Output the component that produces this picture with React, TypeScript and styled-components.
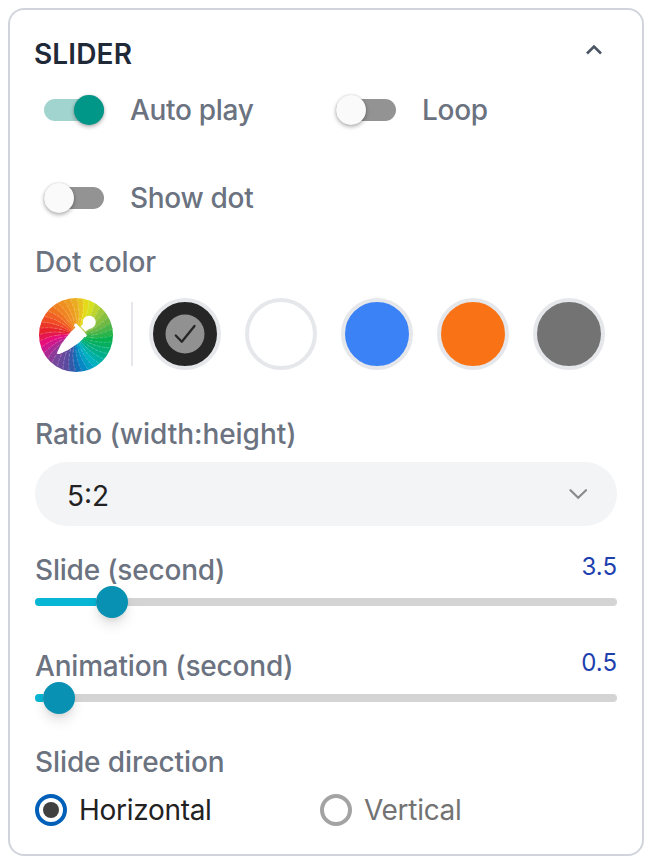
import React, { useState } from "react";
import styled, { createGlobalStyle } from "styled-components";

const GlobalStyle = createGlobalStyle`
  * { box-sizing: border-box; }
  body { margin: 0; background: #fff; font-family: Inter, "Liberation Sans", sans-serif; font-size: 28px; }
  button { font: inherit; }
`;

const Card = styled.section`
  width: 636px;
  height: 848px;
  margin: 8px;
  padding: 32px 25px 0;
  border: 2px solid #d1d5db;
  border-radius: 16px;
  background: #fff;
`;

const Header = styled.header`
  display: flex;
  justify-content: space-between;
  align-items: center;
  height: 24px;
  padding-right: 13px;
`;

const Title = styled.h2`
  margin: 0 0 0 -1px;
  font-size: 28px;
  line-height: 24px;
  font-weight: 600;
  letter-spacing: 0.15px;
  color: #1f2937;
`;

const Collapse = styled.button`
  display: flex;
  padding: 0;
  margin-bottom: 9px;
  border: 0;
  background: none;
`;

const Toggles = styled.div`
  display: grid;
  grid-template-columns: 292px 1fr;
  grid-auto-rows: 88px;
`;

const ToggleRow = styled.div`
  display: flex;
  align-items: center;
  gap: 26px;
  padding-left: 9px;
`;

const Switch = styled.button<{ $on: boolean }>`
  display: flex;
  align-items: center;
  justify-content: ${(p) => (p.$on ? "flex-end" : "flex-start")};
  width: 60px;
  height: 22px;
  padding: 0;
  border: 0;
  border-radius: 11px;
  background: ${(p) => (p.$on ? "#a2d4cf" : "#939393")};
`;

const Knob = styled.span<{ $on: boolean }>`
  flex: none;
  width: 30px;
  height: 30px;
  border-radius: 50%;
  background: ${(p) => (p.$on ? "#009688" : "#fafafa")};
  box-shadow: 0 2px 4px rgba(0, 0, 0, 0.3), 0 0 2px rgba(0, 0, 0, 0.16);
`;

const Label = styled.div<{ $tracking?: number }>`
  line-height: 40px;
  font-weight: 500;
  letter-spacing: ${(p) => p.$tracking ?? -0.1}px;
  color: #6b7280;
  white-space: nowrap;
`;

const Swatches = styled.div`
  display: flex;
  align-items: center;
  height: 104px;
  margin-bottom: 28px;
  padding-left: 4px;
`;

const Divider = styled.div`
  flex: none;
  width: 2px;
  height: 64px;
  margin: 0 16px 0 18px;
  background: #e5e7eb;
`;

const Swatch = styled.button<{ $color: string }>`
  display: flex;
  flex: none;
  align-items: center;
  justify-content: center;
  width: 72px;
  height: 72px;
  margin-right: 24px;
  padding: 0;
  border: 4px solid #e5e7eb;
  border-radius: 50%;
  background: ${(p) => p.$color};

  &:last-child { margin-right: 0; }
`;

const Picker = styled.svg`
  display: block;
  flex: none;
  margin-top: 2px;
`;

const Select = styled.button`
  display: flex;
  align-items: center;
  justify-content: space-between;
  width: 582px;
  height: 64px;
  margin: 8px 0 24px;
  padding: 3px 30px 0 32px;
  border: 0;
  border-radius: 32px;
  background: #f3f4f6;
  color: #222;
`;

const SelectArrow = styled.svg`
  margin-bottom: 3px;
`;

const SliderBlock = styled.div`
  height: 96px;
`;

const SliderHead = styled.div`
  display: flex;
  justify-content: space-between;
`;

const Value = styled.output`
  font-size: 24px;
  line-height: 33px;
  color: #1e40af;
`;

const Track = styled.div`
  display: flex;
  align-items: center;
  height: 8px;
  margin-top: 8px;
  border-radius: 4px;
  background: #d4d4d4;
`;

const Fill = styled.div`
  height: 8px;
  border-radius: 4px 0 0 4px;
  background: #06b6d4;
`;

const Thumb = styled.div`
  flex: none;
  width: 32px;
  height: 32px;
  border-radius: 50%;
  background: #0891b2;
  box-shadow: 0 8px 14px -2px rgba(0, 0, 0, 0.13), 0 3px 6px -2px rgba(0, 0, 0, 0.1);
`;

const Radios = styled.div`
  display: grid;
  grid-template-columns: 285px 1fr;
  margin-top: 12px;
`;

const RadioOption = styled.div<{ $checked: boolean }>`
  display: flex;
  align-items: center;
  gap: 12px;
  height: 32px;
  letter-spacing: -0.3px;
  color: ${(p) => (p.$checked ? "#222" : "#737373")};
`;

const Ring = styled.span<{ $checked: boolean }>`
  display: flex;
  align-items: center;
  justify-content: center;
  width: 32px;
  height: 32px;
  border: 4px solid ${(p) => (p.$checked ? "#005fb8" : "#a3a3a3")};
  border-radius: 50%;
`;

const RingDot = styled.span`
  width: 16px;
  height: 16px;
  border-radius: 50%;
  background: #404040;
`;

const stops: [number, number[]][] = [
  [0, [234, 180, 32]], [20, [226, 230, 24]], [42, [170, 203, 55]], [65, [112, 184, 68]],
  [95, [6, 176, 76]], [122, [0, 174, 130]], [145, [0, 178, 190]], [162, [0, 145, 200]],
  [178, [22, 100, 178]], [192, [85, 75, 160]], [220, [125, 70, 155]], [238, [180, 35, 145]],
  [252, [232, 10, 135]], [272, [228, 28, 45]], [295, [240, 75, 35]], [320, [240, 125, 34]],
  [345, [238, 155, 34]], [360, [234, 180, 32]],
];

function hueAt(deg: number) {
  const d = ((deg % 360) + 360) % 360;
  const i = Math.max(1, stops.findIndex(([s]) => s >= d));
  const [a, ca] = stops[i - 1];
  const [b, cb] = stops[i];
  const t = (d - a) / (b - a);
  return `rgb(${ca.map((v, k) => Math.round(v + (cb[k] - v) * t)).join(",")})`;
}

function polar(deg: number, r: number) {
  const a = ((deg - 90) * Math.PI) / 180;
  return `${(37 + r * Math.cos(a)).toFixed(2)} ${(37 + r * Math.sin(a)).toFixed(2)}`;
}

const SPOKES = 36;
const STEP = 360 / SPOKES;
const spokes = Array.from({ length: SPOKES }, (_, i) => i * STEP);

function ColorPicker() {
  return (
    <Picker width="74" height="74" viewBox="0 0 74 74">
      <defs>
        <clipPath id="wheel"><circle cx="37" cy="37" r="37" /></clipPath>
      </defs>
      <g clipPath="url(#wheel)">
        {spokes.map((d) => (
          <path
            key={d}
            d={`M37 37 Q${polar(d + 16, 20)} ${polar(d, 38)} L${polar(d + STEP + 1, 38)} Q${polar(d + STEP + 17, 20)} 37 37Z`}
            fill={hueAt(d + STEP / 2)}
          />
        ))}
        {spokes.map((d) => (
          <path
            key={d}
            d={`M${polar(d + 11, 15)} Q${polar(d + 9, 26)} ${polar(d, 38)}`}
            fill="none"
            stroke="#fff"
            strokeOpacity="0.38"
            strokeWidth="0.6"
            strokeDasharray="3.2 1.4"
          />
        ))}
      </g>
      <g fill="#fff">
        <path d="M38 28 L46 38 Q42 44 35 48 Q29 53 21 55.8 Q17 57 18.5 53.5 Q21 47 26 41 Q31 34 38 28Z" />
        <path d="M41 29 L46 24 L53 29 L46 34Z" />
        <circle cx="50.2" cy="24.2" r="6.5" />
        <path d="M36.8 27.3 L46 37.5" fill="none" stroke="#fff" strokeWidth="3.4" strokeLinecap="round" />
      </g>
      <path d="M38.7 26.2 L47.3 34.6" fill="none" stroke="#c2cc31" strokeWidth="1" />
    </Picker>
  );
}

function Toggle({ label, initial = false }: { label: string; initial?: boolean }) {
  const [on, setOn] = useState(initial);
  return (
    <ToggleRow>
      <Switch $on={on} role="switch" aria-checked={on} aria-label={label} onClick={() => setOn(!on)}>
        <Knob $on={on} />
      </Switch>
      <Label $tracking={-0.3}>{label}</Label>
    </ToggleRow>
  );
}

function Slider({ label, value, offset }: { label: string; value: string; offset: number }) {
  return (
    <SliderBlock>
      <SliderHead>
        <Label $tracking={-0.2}>{label}</Label>
        <Value>{value}</Value>
      </SliderHead>
      <Track>
        <Fill style={{ width: offset }} />
        <Thumb />
      </Track>
    </SliderBlock>
  );
}

const colors = ["#262626", "#ffffff", "#3b82f6", "#f97316", "#737373"];

export default function App() {
  const [color, setColor] = useState(colors[0]);
  const [direction, setDirection] = useState("Horizontal");
  return (
    <>
      <GlobalStyle />
      <Card>
        <Header>
          <Title>SLIDER</Title>
          <Collapse aria-label="Collapse">
            <svg width="20" height="12" viewBox="0 0 20 12" fill="none" stroke="#4b5563" strokeWidth="2.6">
              <path d="M3 9.5 L10 2.5 L17 9.5" />
            </svg>
          </Collapse>
        </Header>
        <Toggles>
          <Toggle label="Auto play" initial />
          <Toggle label="Loop" />
          <Toggle label="Show dot" />
        </Toggles>
        <Label>Dot color</Label>
        <Swatches>
          <ColorPicker />
          <Divider />
          {colors.map((c) => (
            <Swatch key={c} $color={c} aria-label={c} onClick={() => setColor(c)}>
              {c === color && (
                <svg width="40" height="40" viewBox="0 0 40 40" fill="none">
                  <circle cx="20" cy="20" r="19.5" fill="#919191" />
                  <path d="M10.8 21.5 L16.8 27.7 L29.5 12" stroke="#262626" strokeWidth="2.3" strokeLinecap="round" strokeLinejoin="round" />
                </svg>
              )}
            </Swatch>
          ))}
        </Swatches>
        <Label $tracking={-0.05}>Ratio (width:height)</Label>
        <Select>
          5:2
          <SelectArrow width="18" height="12" viewBox="0 0 18 12" fill="none" stroke="#8a8a8a" strokeWidth="2.2" strokeLinecap="round">
            <path d="M1.5 2.2 L9.2 9.7 L17 2.2" />
          </SelectArrow>
        </Select>
        <Slider label="Slide (second)" value="3.5" offset={61} />
        <Slider label="Animation (second)" value="0.5" offset={8} />
        <Label>Slide direction</Label>
        <Radios role="radiogroup">
          {["Horizontal", "Vertical"].map((d) => (
            <RadioOption key={d} $checked={d === direction} role="radio" aria-checked={d === direction} onClick={() => setDirection(d)}>
              <Ring $checked={d === direction}>{d === direction && <RingDot />}</Ring>
              {d}
            </RadioOption>
          ))}
        </Radios>
      </Card>
    </>
  );
}
